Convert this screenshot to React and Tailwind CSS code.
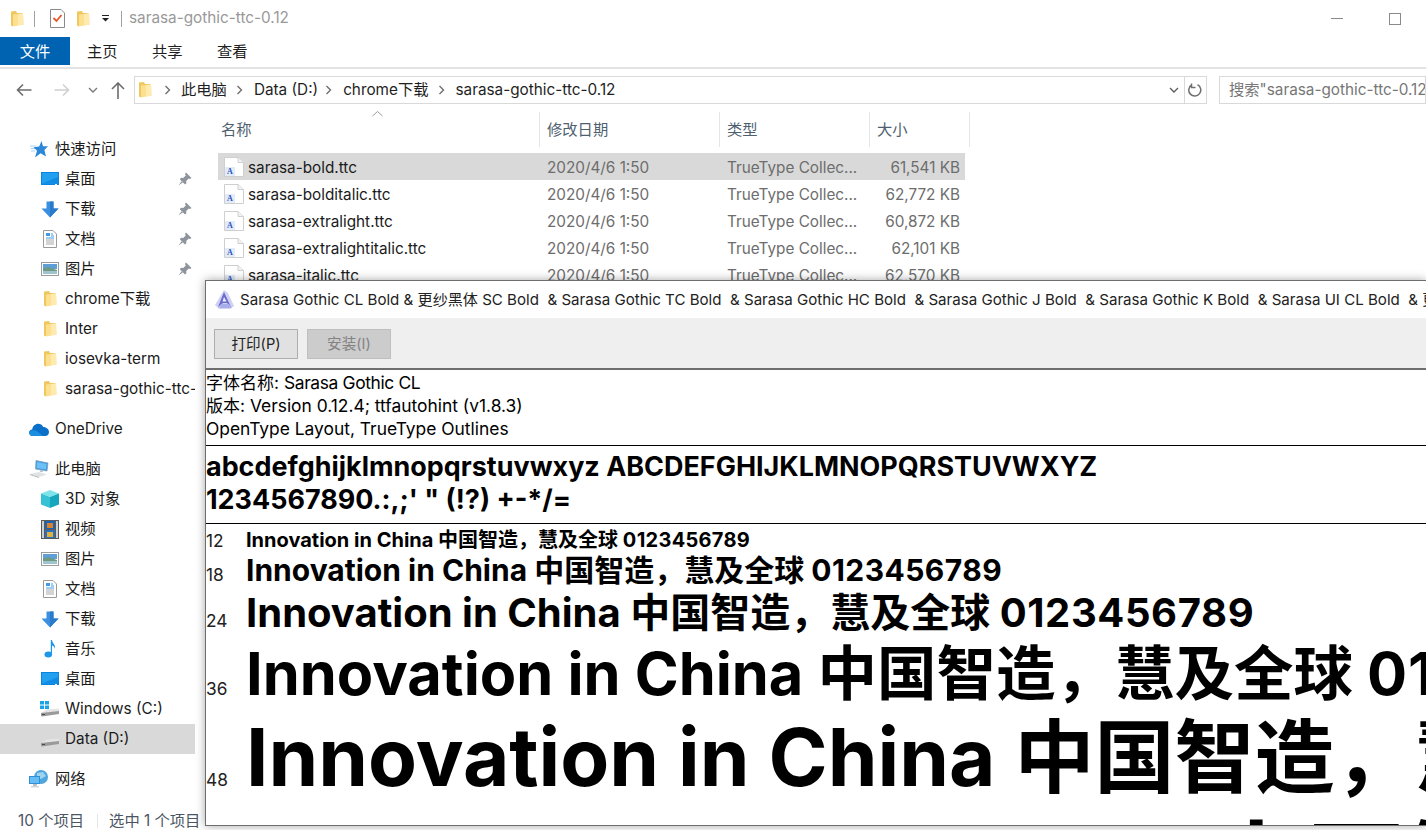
const Folder = ({ className = "" }) => (
  <svg className={`shrink-0 ${className}`} width="14" height="18" viewBox="0 0 14 18">
    <path d="M1 1.5 L6 1 L7 3 L12.5 3 L13 14.5 L3 15 L3 16.5 L1 15.5 Z" fill="#eec75f" />
    <path d="M3 4.5 L13 3.5 L13.5 14.5 L3 16.5 Z" fill="#fde08f" />
    <path d="M8 4 L13 3.5 L13.5 14.5 L8 15.5 Z" fill="#ffeab0" />
  </svg>
);
const Chev = ({ className = "" }) => (
  <svg className={className} width="8" height="10" viewBox="0 0 8 10"><path d="M1.5 1 L5.5 5 L1.5 9" fill="none" stroke="#6f6f6f" strokeWidth="1.4" /></svg>
);
const Pin = () => (
  <svg width="14" height="14" viewBox="0 0 14 14"><path d="M8 .5 L13.5 6 L12 7 L10.8 6.4 L8.2 9 L8.4 11.2 L7 12.4 L1.8 7.2 L3 5.8 L5.2 6 L7.8 3.4 L7 2 Z M3.8 9 L.5 13.5 L5 10.2 Z" fill="#8d949c" /></svg>
);
const Star = () => (
  <svg width="18" height="17" viewBox="0 0 18 17">
    <path d="M0 5h6M1 7.5h5M1 10h4" stroke="#a9d4f5" strokeWidth="1" />
    <path d="M11.5 0 L13 5.3 L18 5.3 L14.4 9 L16 15.5 L10.6 12.2 L5 16.5 L7 9.8 L3.5 6.2 L9.2 5.6 Z" fill="#2b88d8" />
  </svg>
);
const Desktop = () => (
  <svg width="18" height="14" viewBox="0 0 18 14"><rect x="0" y="0" width="18" height="13" fill="#0a84e0" /><rect x="1" y="1" width="16" height="10.5" fill="#22a0f0" /><path d="M1 11.5 L17 11.5 L17 5 Z" fill="#0f8be3" /><rect x="14" y="12" width="2" height="1" fill="#fff" /></svg>
);
const Down = () => (
  <svg width="18" height="17" viewBox="0 0 18 17"><path d="M5.5 0.5 H12.5 V7.5 H17.5 L9 16.5 L0.5 7.5 H5.5 Z" fill="#3b8fe0" /><path d="M9 .5 H12.5 V7.5 H17.5 L9 16.5 Z" fill="#2a7acb" /></svg>
);
const DocIcon = () => (
  <svg width="16" height="18" viewBox="0 0 16 18"><path d="M1.5 .5 H11 L14.5 4 V17.5 H1.5 Z" fill="#fff" stroke="#9a9a9a" /><path d="M4 3 H8 V6 H4 Z" fill="#3f9be8" /><path d="M9 4h2M9 6h3M4 8h8" stroke="#3f9be8" /><path d="M4 10h8M4 12h8M4 14h8" stroke="#a8a8a8" /></svg>
);
const Pic = () => (
  <svg width="18" height="14" viewBox="0 0 18 14"><rect x=".5" y=".5" width="17" height="13" fill="#fff" stroke="#9c9c9c" /><rect x="2" y="2" width="14" height="5" fill="#5d9fd6" /><path d="M2 7 L7 5 L16 8 V12 H2 Z" fill="#6f9a7f" /><path d="M2 9 L16 9 V12 H2Z" fill="#9fc4cf" /></svg>
);
const Cloud = () => (
  <svg width="20" height="13" viewBox="0 0 20 13"><path d="M4 13 C1.5 13 0 11.5 0 9.6 C0 7.8 1.4 6.4 3.2 6.4 C3.7 3 6.4 .8 9 .8 C11.4 .8 13.2 2 14.2 4 C17.4 4 20 6.4 20 9 C20 11.4 18.4 13 16 13 Z" fill="#0a6fc9" /><path d="M4 13 C1.5 13 0 11.5 0 9.6 C2 6.5 7 6.5 9 9 L14 13 Z" fill="#1b8ee0" /></svg>
);
const PC = () => (
  <svg width="20" height="18" viewBox="0 0 20 18"><path d="M7 .5 L19 3 L18 11 L6.5 9 Z" fill="#3f9ae0" stroke="#7a9ab8" strokeWidth=".7" /><path d="M8 2 L17.5 4 L17 9.6 L7.6 8 Z" fill="#6cc0f5" /><path d="M11 10 L14 10.5 L14 12 L11 12 Z" fill="#b9c6d2" /><path d="M1 14 L10 12 L18 14.5 L10 17 Z" fill="#dfe3e6" /><path d="M1 14 L10 17 L10 18 L1 15 Z" fill="#b3b7ba" /></svg>
);
const Cube = () => (
  <svg width="18" height="18" viewBox="0 0 18 18"><path d="M9 0 L18 3.5 L9 7 L0 3.5 Z" fill="#7fe3ec" /><path d="M0 3.5 L9 7 V18 L0 14.5 Z" fill="#34c2d4" /><path d="M18 3.5 L9 7 V18 L18 14.5 Z" fill="#15a5bd" /></svg>
);
const Film = () => (
  <svg width="18" height="19" viewBox="0 0 18 19"><rect width="18" height="19" fill="#5a5a5a" /><rect x="1" y="1" width="2" height="17" fill="#d0d0d0" /><rect x="15" y="1" width="2" height="17" fill="#d0d0d0" /><rect x="4" y="1" width="10" height="8" fill="#1b63b5" /><rect x="4" y="10" width="10" height="8" fill="#2b6fc0" /><rect x="6" y="3" width="6" height="5" fill="#d9822b" /><rect x="6" y="12" width="6" height="5" fill="#e0b23b" /></svg>
);
const Music = () => (
  <svg width="12" height="18" viewBox="0 0 12 18"><ellipse cx="4.3" cy="14.6" rx="3.8" ry="3" fill="#1c97ea" /><path d="M6.8 0 H8 C8.4 3.5 11.8 4.5 11 9 C10.4 6.8 9.4 6 8 5.6 V15 H6.8 Z" fill="#1c97ea" /></svg>
);
const Drive = ({ win }) => (
  <svg width="20" height="16" viewBox="0 0 20 16">
    {win && <g fill="#19a3e8"><rect x="0" y="0" width="4" height="3.5" /><rect x="5" y="0" width="4" height="3.5" /><rect x="0" y="4.5" width="4" height="3.5" /><rect x="5" y="4.5" width="4" height="3.5" /></g>}
    <path d="M1 12 L7 8.5 L19 7.5 L19 11 L3 14 Z" fill="#e4e4e4" />
    <path d="M1 12 L19 10 L19 13 L2 15.5 L1 15 Z" fill="#9a9a9a" />
    <rect x="2" y="13" width="3" height="1" fill="#4a4a4a" />
  </svg>
);
const Net = () => (
  <svg width="20" height="18" viewBox="0 0 20 18"><circle cx="12" cy="7" r="7" fill="#4fa5dd" /><path d="M8 3 L14 2 L17 6 L12 9 L8 7 Z" fill="#9fd3ef" /><rect x="0" y="6" width="11" height="8" fill="#2f8fd8" /><rect x="1" y="7" width="9" height="6" fill="#66bdf3" /><rect x="4" y="14" width="4" height="2" fill="#b7c0c8" /><rect x="2" y="16" width="8" height="1.5" fill="#d4d8db" /></svg>
);
const FontFile = () => (
  <svg width="20" height="20" viewBox="0 0 20 20">
    <path d="M.5 .5 H14 L19.5 5.5 V19.5 H.5 Z" fill="#fff" stroke="#cfcfcf" />
    <path d="M14 .5 V5.5 H19.5" fill="#f2f2f2" stroke="#cfcfcf" />
    <rect x="1" y="10" width="10" height="9" fill="#e3eaf8" />
    <text x="3" y="17" fontSize="8" fontWeight="700" fontFamily="Liberation Serif, serif" fill="#2a52be">A</text>
  </svg>
);
const FontLogo = () => (
  <svg className="shrink-0" width="20" height="20" viewBox="0 0 20 20">
    <path d="M9 0 L13 3 L19 16 L15 19 L4 19 L0 15 Z" fill="#cfd2f3" />
    <path d="M9 2 L3 17 L8 13 L12 13 L16 17 Z" fill="#6a6ad0" />
    <path d="M9 7 L7.5 11.5 L11.5 11.5 Z" fill="#eeeefb" />
    <path d="M6 14 L14 14 L17 18 L4 18 Z" fill="#a9aee8" />
  </svg>
);
const Check = () => (
  <svg width="15" height="19" viewBox="0 0 15 19"><path d="M.5 .5 H11 L14.5 4 V18.5 H.5 Z" fill="#fff" stroke="#8a8a8a" /><path d="M3.5 9 L6.5 12 L11.5 6" fill="none" stroke="#e8562a" strokeWidth="1.8" /></svg>
);

const Item = ({ icon, label, pin, sub = true, active }) => (
  <div className={`h-[30px] w-[195px] flex items-center shrink-0 text-[#1b1b1b] ${active ? "bg-[#d9d9d9]" : ""}`}>
    <div className={`flex items-center justify-center shrink-0 ${sub ? "w-[65px] pl-[35px]" : "w-[55px] pl-[26px] pr-[4px]"}`}>
      {icon}
    </div>
    <span className="overflow-hidden whitespace-nowrap flex-1 pt-[1px]">{label}</span>
    {pin && <span className="w-[17px] shrink-0"><Pin /></span>}
  </div>
);

const files = [
  ["sarasa-bold.ttc", "61,541 KB", true],
  ["sarasa-bolditalic.ttc", "62,772 KB"],
  ["sarasa-extralight.ttc", "60,872 KB"],
  ["sarasa-extralightitalic.ttc", "62,101 KB"],
  ["sarasa-italic.ttc", "62,570 KB"],
];

const samples = [
  ["12", "text-[20px]", "h-[32px] leading-[32px]"],
  ["18", "text-[30px]", "h-[28px] leading-[28px]"],
  ["24", "text-[40px]", "h-[57px] leading-[57px]"],
  ["36", "text-[59.5px]", "h-[64px] leading-[64px]"],
  ["48", "text-[80px]", "h-[104px] leading-[104px]"],
  ["60", "text-[100px]", "h-[119px] leading-[119px]"],
];

export default function App() {
  return (
    <div className="relative w-[1426px] h-[830px] overflow-hidden bg-white font-['Inter','Noto_Sans_CJK_SC',sans-serif] text-[15.3px] flex flex-col">
      {/* Title bar */}
      <div className="h-[37px] shrink-0 flex items-center pl-[10px] pr-[25px]">
        <Folder />
        <div className="w-px h-[16px] bg-[#a0a0a0] ml-[10px]" />
        <div className="ml-[15px]"><Check /></div>
        <div className="ml-[11px]"><Folder /></div>
        <svg className="ml-[11px]" width="9" height="9" viewBox="0 0 9 9"><path d="M1 1.5h7" stroke="#222" /><path d="M1 4 H8 L4.5 7.5 Z" fill="#222" /></svg>
        <div className="w-px h-[16px] bg-[#a0a0a0] ml-[11px]" />
        <span className="ml-[7px] text-[#999999]">sarasa-gothic-ttc-0.12</span>
        <div className="flex-1" />
        <div className="w-[12px] h-px bg-[#8a8a8a]" />
        <div className="w-[12px] h-[12px] border border-[#8a8a8a] ml-[46px]" />
      </div>
      {/* Ribbon */}
      <div className="h-[32px] shrink-0 border-b-2 border-[#e3e3e3] flex items-start text-[#1f1f1f]">
        <div className="w-[70px] h-[28px] pt-[2px] bg-[#0063b1] text-white flex items-center justify-center">文件</div>
        <div className="ml-[17px] h-[28px] pt-[2px] flex items-center gap-[34.4px]">
          <span>主页</span><span>共享</span><span>查看</span>
        </div>
      </div>
      {/* Address row */}
      <div className="h-[41px] shrink-0 flex items-center pt-[1px] pl-[16px] text-[#1f1f1f]">
        <svg width="16" height="14" viewBox="0 0 16 14"><path d="M7 1.5 L1.5 7 L7 12.5 M1.5 7 H15.5" fill="none" stroke="#6d6d6d" strokeWidth="1.6" /></svg>
        <svg className="ml-[22px]" width="16" height="14" viewBox="0 0 16 14"><path d="M9 1.5 L14.5 7 L9 12.5 M14.5 7 H.5" fill="none" stroke="#d0d0d0" strokeWidth="1.6" /></svg>
        <svg className="ml-[18px]" width="10" height="8" viewBox="0 0 10 8"><path d="M1 2 L5 6 L9 2" fill="none" stroke="#7a7a7a" strokeWidth="1.4" /></svg>
        <svg className="ml-[13px]" width="14" height="17" viewBox="0 0 14 17"><path d="M1 7 L7 1 L13 7 M7 1 V17" fill="none" stroke="#6d6d6d" strokeWidth="1.6" /></svg>
        <div className="ml-[9px] w-[1073px] h-[28px] border border-[#d9d9d9] flex items-center">
          <div className="ml-[3px]"><Folder /></div>
          <Chev className="ml-[12px]" />
          <span className="ml-[9px] pt-[1px]">此电脑</span>
          <Chev className="ml-[9px]" />
          <span className="ml-[10px] pt-[1px]">Data (D:)</span>
          <Chev className="ml-[7px]" />
          <span className="ml-[10px] pt-[1px]">chrome下载</span>
          <Chev className="ml-[9px]" />
          <span className="ml-[10px] pt-[1px]">sarasa-gothic-ttc-0.12</span>
          <div className="flex-1" />
          <svg width="10" height="8" viewBox="0 0 10 8"><path d="M1 2 L5 6 L9 2" fill="none" stroke="#5f5f5f" strokeWidth="1.4" /></svg>
          <div className="ml-[5px] w-px h-full bg-[#d9d9d9]" />
          <svg className="mx-[3px]" width="15" height="15" viewBox="0 0 15 15"><path d="M3.5 2 A6 6 0 1 0 9.5 1.7 M3.5 .5 V4.5 H7.5" fill="none" stroke="#6f6f6f" strokeWidth="1.5" /></svg>
        </div>
        <div className="ml-[12px] flex-1 h-[28px] border border-[#d9d9d9] flex items-center pl-[9px] pt-[1px] overflow-hidden whitespace-nowrap text-[#777777]">
          搜索"sarasa-gothic-ttc-0.12"
        </div>
      </div>
      {/* Body */}
      <div className="flex-1 flex min-h-0">
        <div className="w-[196px] shrink-0 pt-[24px] flex flex-col">
          <Item sub={false} icon={<Star />} label="快速访问" />
          <Item icon={<Desktop />} label="桌面" pin />
          <Item icon={<Down />} label="下载" pin />
          <Item icon={<DocIcon />} label="文档" pin />
          <Item icon={<Pic />} label="图片" pin />
          <Item icon={<Folder />} label="chrome下载" />
          <Item icon={<Folder />} label="Inter" />
          <Item icon={<Folder />} label="iosevka-term" />
          <Item icon={<Folder />} label="sarasa-gothic-ttc-0.12" />
          <div className="h-[10px] shrink-0" />
          <Item sub={false} icon={<Cloud />} label="OneDrive" />
          <div className="h-[10px] shrink-0" />
          <Item sub={false} icon={<PC />} label="此电脑" />
          <Item icon={<Cube />} label="3D 对象" />
          <Item icon={<Film />} label="视频" />
          <Item icon={<Pic />} label="图片" />
          <Item icon={<DocIcon />} label="文档" />
          <Item icon={<Down />} label="下载" />
          <Item icon={<Music />} label="音乐" />
          <Item icon={<Desktop />} label="桌面" />
          <Item icon={<Drive win />} label="Windows (C:)" />
          <Item active icon={<Drive />} label="Data (D:)" />
          <div className="h-[10px] shrink-0" />
          <Item sub={false} icon={<Net />} label="网络" />
        </div>
        <div className="flex-1 pl-[22px] pt-[2px]">
          <div className="relative h-[41px] flex items-start text-[#4f5f70]">
            <svg className="absolute left-[154px] -top-[1px]" width="11" height="6" viewBox="0 0 11 6"><path d="M.5 5 L5.5 .5 L10.5 5" fill="none" stroke="#9a9a9a" /></svg>
            <div className="w-[322px] h-[35px] pt-[1px] border-r border-[#e5e5e5] pl-[3px] flex items-center">名称</div>
            <div className="w-[180px] h-[35px] pt-[1px] border-r border-[#e5e5e5] pl-[7px] flex items-center">修改日期</div>
            <div className="w-[150px] h-[35px] pt-[1px] border-r border-[#e5e5e5] pl-[7px] flex items-center">类型</div>
            <div className="w-[100px] h-[35px] pt-[1px] border-r border-[#e5e5e5] pl-[7px] flex items-center">大小</div>
          </div>
          {files.map(([n, s, sel]) => (
            <div key={n} className={`w-[747px] h-[27px] flex items-center ${sel ? "bg-[#d9d9d9]" : ""}`}>
              <div className="w-[30px] pl-[6px] shrink-0"><FontFile /></div>
              <span className="w-[299px] pt-[4px] text-[#1b1b1b]">{n}</span>
              <span className="w-[180px] pt-[4px] text-[#6d6d6d]">2020/4/6 1:50</span>
              <span className="w-[143px] pt-[4px] text-[#6d6d6d]">TrueType Collec...</span>
              <span className="w-[90px] pt-[4px] text-right text-[#6d6d6d]">{s}</span>
            </div>
          ))}
        </div>
      </div>
      {/* Status bar */}
      <div className="h-[20px] shrink-0 flex items-start pl-[18px] text-[#4b5563] leading-[20px] pt-[1px]">
        <span>10 个项目</span>
        <div className="w-px h-[14px] bg-[#e5e5e5] ml-[13px] mt-[3px]" />
        <span className="ml-[11px]">选中 1 个项目</span>
        <span className="ml-[6px]">60.1 MB</span>
      </div>

      {/* Font preview window */}
      <div className="absolute left-[205px] top-[280px] w-[1221px] h-[546px] bg-white border-t border-l border-b border-[#6e6e6e] shadow-[0_0_9px_rgba(0,0,0,0.35)] overflow-hidden flex flex-col whitespace-nowrap text-black">
        <div className="h-[37px] shrink-0 flex items-center pl-[9px] text-[15.1px] text-[#222222]">
          <FontLogo />
          <span className="ml-[5px] pt-[2px]">Sarasa Gothic CL Bold &amp; 更纱黑体 SC Bold&nbsp; &amp; Sarasa Gothic TC Bold&nbsp; &amp; Sarasa Gothic HC Bold&nbsp; &amp; Sarasa Gothic J Bold&nbsp; &amp; Sarasa Gothic K Bold&nbsp; &amp; Sarasa UI CL Bold&nbsp; &amp; 更纱黑体 UI SC Bold</span>
        </div>
        <div className="h-[52px] shrink-0 bg-[#efefef] border-b-2 border-[#6e6e6e] flex items-center pl-[8px] pt-[2px] gap-[9px] text-[14.6px]">
          <div className="w-[84px] h-[30px] pt-[2px] bg-[#e1e1e1] border border-[#adadad] flex items-center justify-center text-[#222222]">打印(P)</div>
          <div className="w-[84px] h-[30px] pt-[2px] bg-[#cccccc] border border-[#bfbfbf] flex items-center justify-center text-[#838383]">安装(I)</div>
        </div>
        <div className="h-[76px] shrink-0 border-b border-black pt-[1px] text-[17.4px] leading-[23px]">
          <div className="h-[23px]"><span className="text-[17px] leading-none">字体名称</span>: <span className="tracking-[-0.35px]">Sarasa Gothic CL</span></div>
          <div className="h-[23px]"><span className="text-[17px] leading-none">版本</span>: Version 0.12.4; ttfautohint (v1.8.3)</div>
          <div className="h-[23px]">OpenType Layout, TrueType Outlines</div>
        </div>
        <div className="h-[78px] shrink-0 border-b border-black pt-[4px] text-[26.95px] font-bold leading-[33px]">
          <div>abcdefghijklmnopqrstuvwxyz ABCDEFGHIJKLMNOPQRSTUVWXYZ</div>
          <div>1234567890.:,;' " (!?) +-*/=</div>
        </div>
        <div className="flex-1 min-h-0 overflow-hidden">
          {samples.map(([pt, size, rowCls]) => (
            <div key={pt} className={`flex items-baseline ${rowCls}`}>
              <span className="w-[40px] shrink-0 text-[17.3px] text-[#222222]">{pt}</span>
              <span className={`font-bold ${size}`}>Innovation in China 中国智造，慧及全球 <span className="tracking-[0.015em]">0123456789</span></span>
            </div>
          ))}
        </div>
      </div>
    </div>
  );
}
